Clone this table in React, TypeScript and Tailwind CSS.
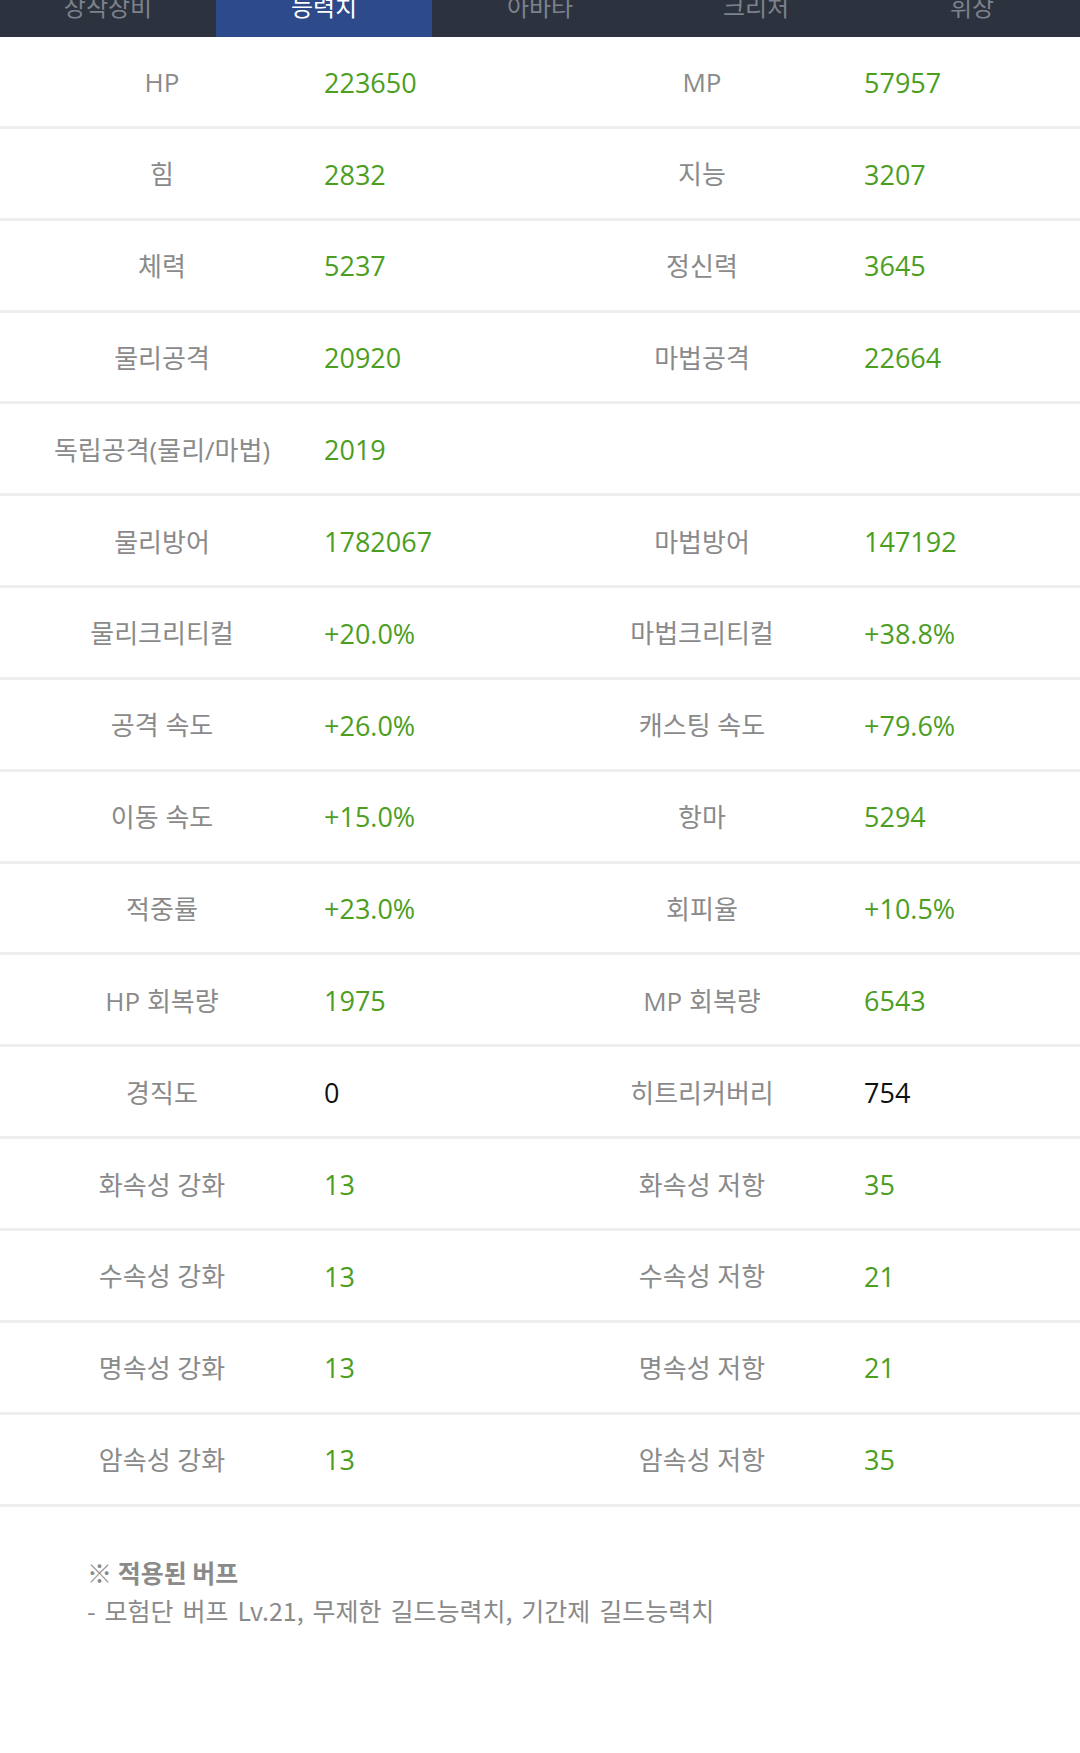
import React from "react";

type Cell = { label: string; value: string; black?: boolean };
type Row = [Cell, Cell | null];

const rows: Row[] = [
  [{ label: "HP", value: "223650" }, { label: "MP", value: "57957" }],
  [{ label: "힘", value: "2832" }, { label: "지능", value: "3207" }],
  [{ label: "체력", value: "5237" }, { label: "정신력", value: "3645" }],
  [{ label: "물리공격", value: "20920" }, { label: "마법공격", value: "22664" }],
  [{ label: "독립공격(물리/마법)", value: "2019" }, null],
  [{ label: "물리방어", value: "1782067" }, { label: "마법방어", value: "147192" }],
  [{ label: "물리크리티컬", value: "+20.0%" }, { label: "마법크리티컬", value: "+38.8%" }],
  [{ label: "공격 속도", value: "+26.0%" }, { label: "캐스팅 속도", value: "+79.6%" }],
  [{ label: "이동 속도", value: "+15.0%" }, { label: "항마", value: "5294" }],
  [{ label: "적중률", value: "+23.0%" }, { label: "회피율", value: "+10.5%" }],
  [{ label: "HP 회복량", value: "1975" }, { label: "MP 회복량", value: "6543" }],
  [{ label: "경직도", value: "0", black: true }, { label: "히트리커버리", value: "754", black: true }],
  [{ label: "화속성 강화", value: "13" }, { label: "화속성 저항", value: "35" }],
  [{ label: "수속성 강화", value: "13" }, { label: "수속성 저항", value: "21" }],
  [{ label: "명속성 강화", value: "13" }, { label: "명속성 저항", value: "21" }],
  [{ label: "암속성 강화", value: "13" }, { label: "암속성 저항", value: "35" }],
];

const tabs = ["장착장비", "능력치", "아바타", "크리처", "휘장"];

function Pair({ cell }: { cell: Cell | null }) {
  return (
    <>
      <div className="w-[324px] flex items-center justify-center text-[26px] text-[#8a8a8a]">
        {cell ? cell.label : ""}
      </div>
      <div
        className={
          "w-[216px] flex items-center text-[27px] " +
          (cell && cell.black ? "text-[#111111]" : "text-[#4c9e1f]")
        }
      >
        {cell ? cell.value : ""}
      </div>
    </>
  );
}

export default function App() {
  return (
    <div
      className="w-[1080px] h-[1753px] bg-white overflow-hidden"
      style={{ fontFamily: '"Open Sans", "Noto Sans CJK KR", sans-serif' }}
    >
      <div className="h-[37px] overflow-hidden">
        <div className="flex h-[61px] mt-[-24px] bg-[#2c323e]">
          {tabs.map((t, i) => (
            <div
              key={t}
              className={
                "w-[216px] flex items-center justify-center text-[24px] " +
                (i === 1 ? "bg-[#2d4a8b] text-white" : "text-[#7d828c]")
              }
            >
              {t}
            </div>
          ))}
        </div>
      </div>
      {rows.map((r, i) => (
        <div
          key={i}
          className="flex h-[91.85px] pt-[3px] border-b-[3px] border-[#eeeeee]"
        >
          <Pair cell={r[0]} />
          <Pair cell={r[1]} />
        </div>
      ))}
      <div
        className="pl-[87px] pt-[46px] text-[#8a8a8a]"
        style={{ fontFamily: '"Noto Sans CJK KR", sans-serif' }}
      >
        <div className="text-[25px] font-bold leading-[38px]">※ 적용된 버프</div>
        <div className="text-[25px] leading-[38px] [word-spacing:3.3px]">
          - 모험단 버프 Lv.21, 무제한 길드능력치, 기간제 길드능력치
        </div>
      </div>
    </div>
  );
}
